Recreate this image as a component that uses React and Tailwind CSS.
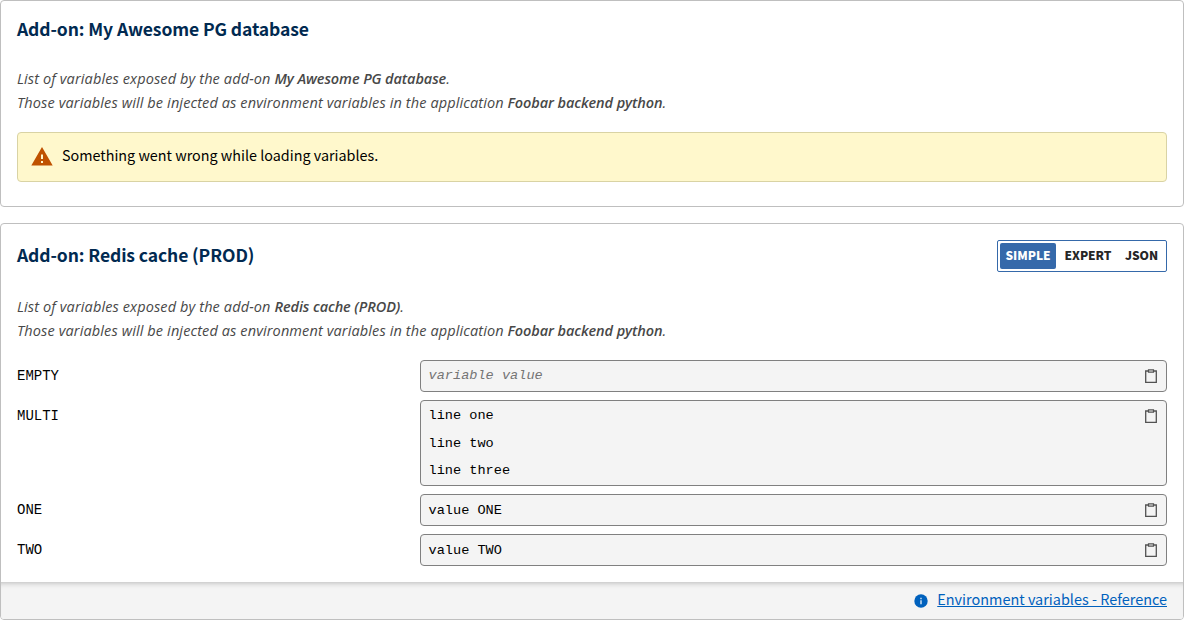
import { useState } from 'react';

function Heading({ children }) {
  return (
    <h2 className="font-['Noto_Sans_CJK_JP',sans-serif] text-[17.5px] leading-8 font-bold tracking-[-0.1px] whitespace-nowrap text-[#012a51]">
      {children}
    </h2>
  );
}

function Strong({ children }) {
  return <strong className="font-semibold tracking-[-0.09px]">{children}</strong>;
}

function Description({ addon }) {
  return (
    <p className="font-['Open_Sans','Noto_Sans',sans-serif] text-[14.5px] leading-6 font-normal tracking-[0.12px] whitespace-nowrap text-[#484848] italic">
      List of variables exposed by the add-on <Strong>{addon}</Strong>.
      <br />
      Those variables will be injected as environment variables in the application <Strong>Foobar backend python</Strong>.
    </p>
  );
}

function WarningIcon() {
  return (
    <svg viewBox="0 0 22 19" className="mb-px h-[19px] w-[22px] shrink-0" aria-hidden="true">
      <path fill="#bf5200" fillRule="evenodd" d="M0.3 18.6 11 0l10.7 18.6H0.3Zm11.7-2.6v-2h-2v2h2Zm0-4V7.5h-2V12h2Z" />
    </svg>
  );
}

function ClipboardIcon() {
  return (
    <svg viewBox="0 0 12 14" className="h-3.5 w-3 shrink-0" fill="none" stroke="#525252" aria-hidden="true">
      <path strokeWidth="1.3" d="M3.3 2H.7v11.3h10.6V2H8.7" />
      <path strokeWidth="1.2" d="M3.5.8h5v2.4h-5z" />
    </svg>
  );
}

function InfoIcon() {
  return (
    <svg viewBox="0 0 14 14" className="size-3.5 shrink-0" aria-hidden="true">
      <circle cx="7" cy="7" r="6.7" fill="#0061bd" />
      <path fill="#fff" fillOpacity=".85" d="M6.3 3.8h1.4v1.4H6.3zM6.3 6.3h1.4v3.9H6.3z" />
    </svg>
  );
}

function Tabs() {
  const [active, setActive] = useState('SIMPLE');
  const tabs = [
    ['SIMPLE', 'w-14'],
    ['EXPERT', 'w-[58px] ml-[3px]'],
    ['JSON', 'w-[47px] ml-px'],
  ];
  return (
    <div className="flex h-8 w-[170px] rounded-[2px] border border-[#3569aa] p-0.5 font-['Noto_Sans_CJK_JP',sans-serif] text-[12px] font-extrabold">
      {tabs.map(([name, box]) => (
        <button
          key={name}
          onClick={() => setActive(name)}
          className={`${box} h-[26px] shrink-0 rounded-[2px] pb-0.5 text-center leading-6 tracking-[-0.05px] ${active === name ? 'bg-[#3569aa] text-white' : 'text-[#262626]'}`}
        >
          {name}
        </button>
      ))}
    </div>
  );
}

const variables = [
  ['EMPTY', ''],
  ['MULTI', 'line one\nline two\nline three'],
  ['ONE', 'value ONE'],
  ['TWO', 'value TWO'],
];

function Variable({ name, value }) {
  const multi = value.includes('\n');
  const textStyle = multi
    ? 'pt-px leading-[27.5px] text-black'
    : value
      ? 'leading-8 text-black'
      : 'leading-[30px] text-[#757575] italic';
  return (
    <div className="flex font-['Liberation_Mono',monospace]">
      <div className="w-[403px] shrink-0 text-[14px] leading-8 text-black">{name}</div>
      <div
        className={`flex flex-1 items-start justify-between rounded-[4px] border border-[#808080] bg-[#f4f4f4] pr-[9px] pl-[7.5px] ${multi ? 'h-[86px]' : 'h-8'}`}
      >
        <div className={`text-[13.6px] whitespace-pre ${textStyle}`}>{value || 'variable value'}</div>
        <button className="pt-2" aria-label="Copy"><ClipboardIcon /></button>
      </div>
    </div>
  );
}

export default function App() {
  return (
    <main className="flex flex-col gap-4 bg-white">
      <section className="h-[207px] rounded-[4px] border border-[#bfbfbf] px-4 pt-3">
        <Heading>Add-on: My Awesome PG database</Heading>
        <div className="mt-[22px]"><Description addon="My Awesome PG database" /></div>
        <div className="mt-[17px] flex h-[50px] items-center gap-[9px] rounded-[4px] border border-[#d9d3a4] bg-[#fff8cc] pl-[13px]">
          <WarningIcon />
          <span className="pb-1 font-['Noto_Sans_CJK_JP',sans-serif] text-[14.35px] leading-6 text-black">Something went wrong while loading variables.</span>
        </div>
      </section>
      <section className="flex h-[397px] flex-col rounded-[4px] border border-[#bfbfbf]">
        <div className="flex-1 px-4 pt-[15px]">
          <div className="flex h-[33px] items-end justify-between">
            <div className="pb-px"><Heading>Add-on: Redis cache (PROD)</Heading></div>
            <Tabs />
          </div>
          <div className="mt-[23px]"><Description addon="Redis cache (PROD)" /></div>
          <div className="mt-[17px] flex flex-col gap-2">
            {variables.map(([name, value]) => (
              <Variable key={name} name={name} value={value} />
            ))}
          </div>
        </div>
        <footer className="flex h-[37px] items-center justify-end gap-[9px] rounded-b-[3px] bg-[#f4f4f4] pr-4 shadow-[inset_0_6px_6px_-6px_#a6a6a6]">
          <InfoIcon />
          <a href="#reference" className="pb-[3px] font-['Noto_Sans_CJK_JP',sans-serif] text-[14.45px] leading-6 text-[#0061bd] underline">Environment variables - Reference</a>
        </footer>
      </section>
    </main>
  );
}
